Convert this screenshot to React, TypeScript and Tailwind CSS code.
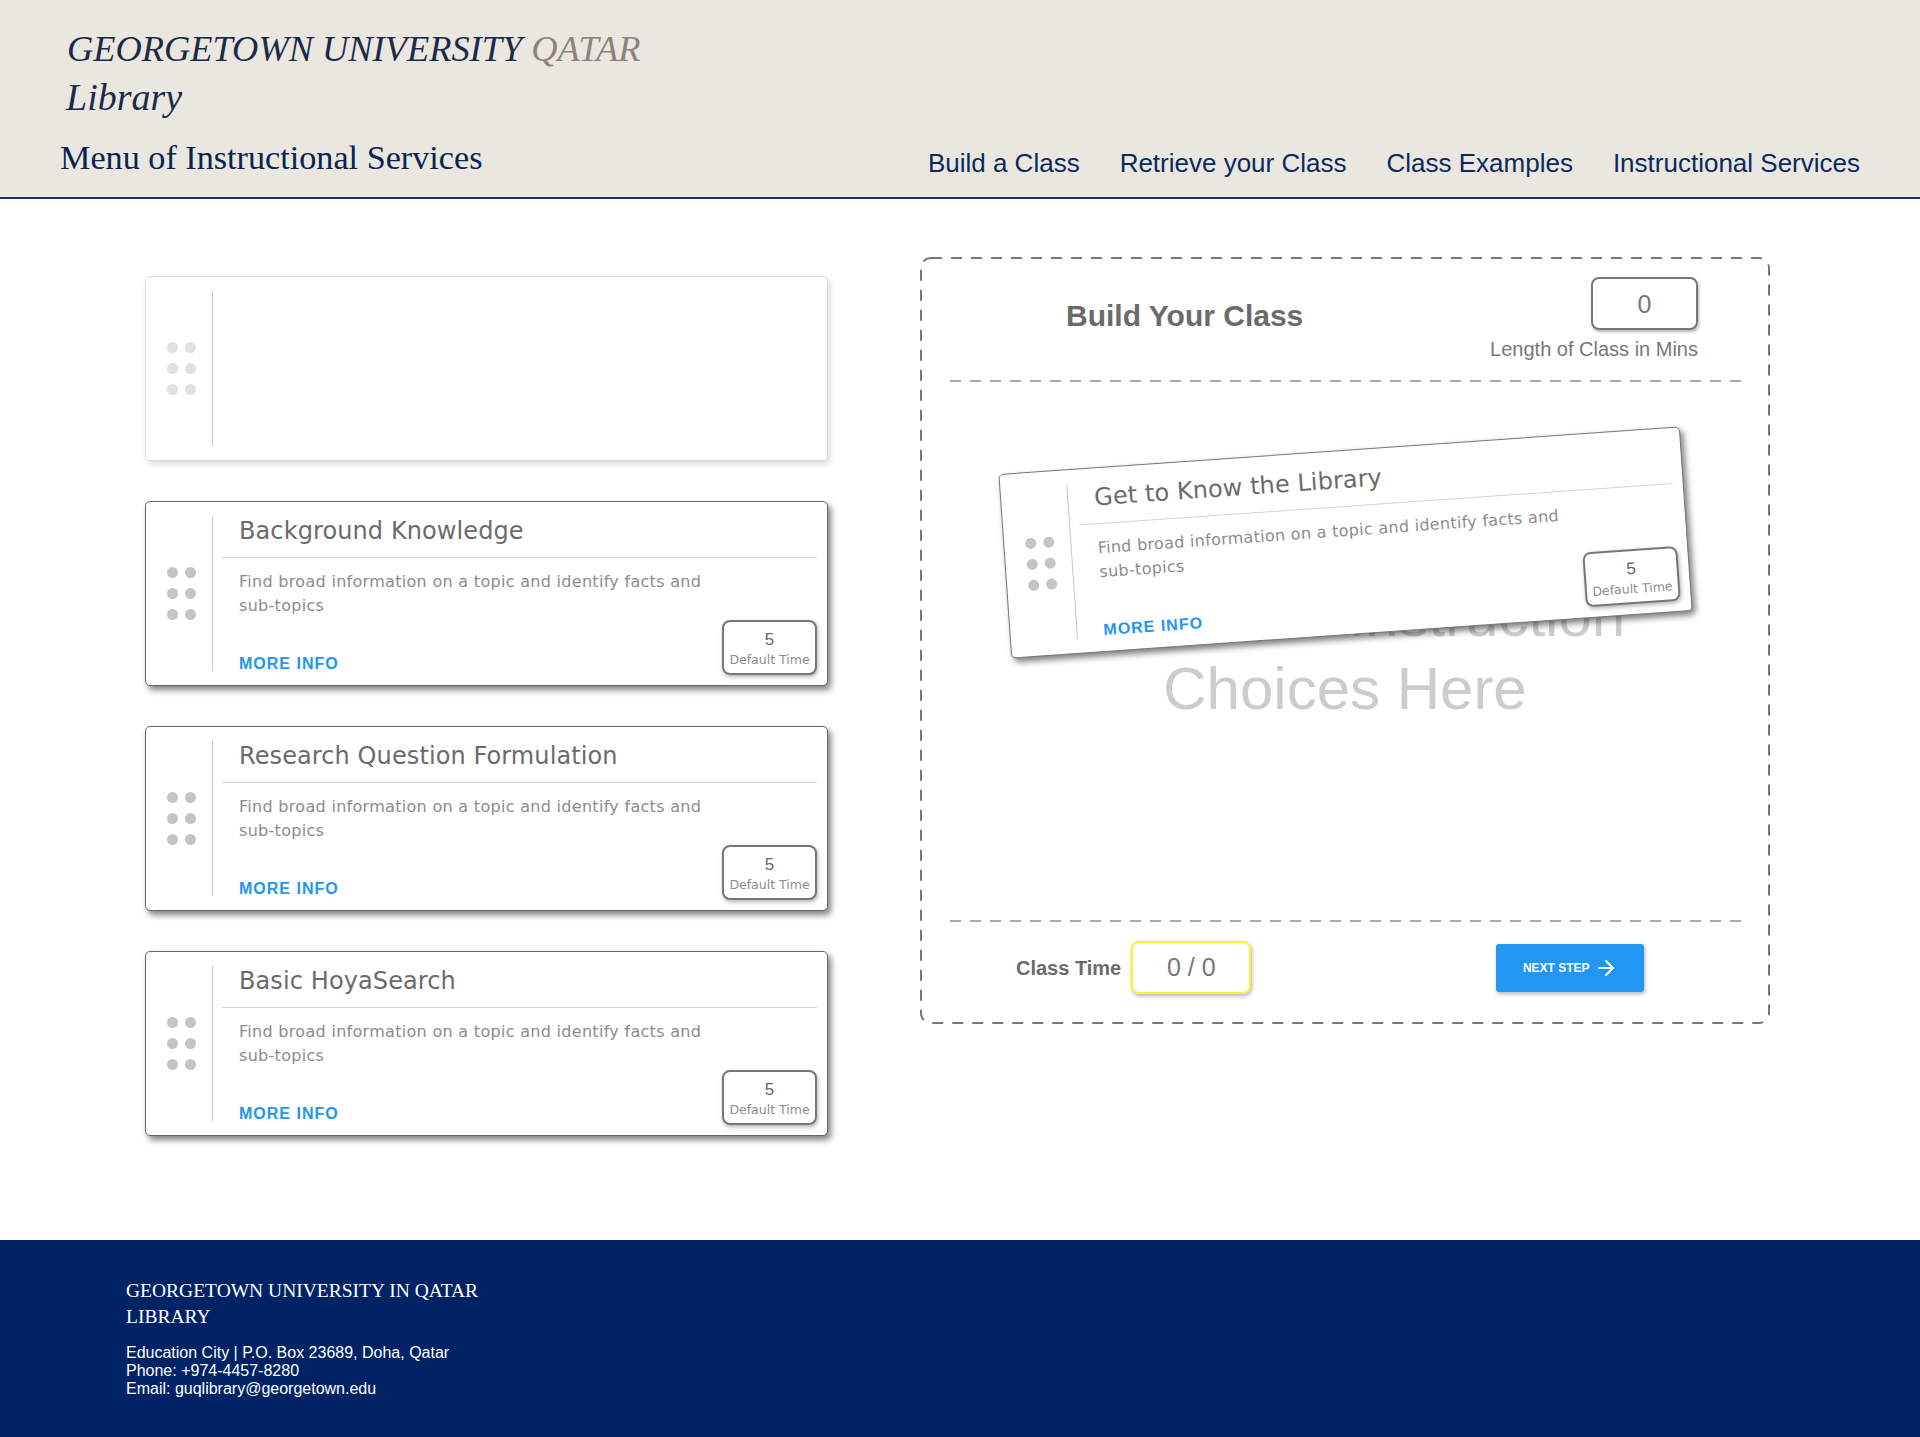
import { ArrowRight } from "lucide-react";

const cards = ["Background Knowledge", "Research Question Formulation", "Basic HoyaSearch"];

function Grip() {
  return (
    <div className="ml-[4px] grid grid-cols-[11px_11px] gap-x-[7px] gap-y-[10px]">
      {[0, 1, 2, 3, 4, 5].map((i) => (
        <span key={i} className="h-[11px] w-[11px] rounded-full bg-[#c4c4c4]" />
      ))}
    </div>
  );
}

function DashedLine() {
  return <div className="ml-[30px] mr-[29px] h-[2px] bg-[repeating-linear-gradient(90deg,#aaa_0_11px,transparent_11px_20px)]" />;
}

function Card({ title, className }: { title?: string; className: string }) {
  return (
    <div className={`flex h-[185px] w-[683px] rounded-[5px] border bg-white font-['DejaVu_Sans',sans-serif] ${className}`}>
      <div className="flex w-[66px] shrink-0 items-center justify-center">
        <Grip />
      </div>
      <div className="my-[14px] w-[1px] bg-[#c8c8c8]" />
      {title && (
        <div className="relative flex-1 pl-[9px] pr-[10px]">
          <div className="h-[56px] border-b border-[#d4d4d4] pl-[17px] pt-[14px] text-[24px] leading-[30px] tracking-[0.1px] text-[#6b6b6b]">
            {title}
          </div>
          <p className="w-[500px] pl-[17px] pt-[12px] text-[16px] leading-[24px] tracking-[0.3px] text-[#8c8c8c]">
            Find broad information on a topic and identify facts and sub-topics
          </p>
          <a className="absolute bottom-[11px] left-[26px] font-['Liberation_Sans',sans-serif] text-[16px] font-bold leading-[20px] tracking-[1px] text-[#2196f3]">
            MORE INFO
          </a>
          <div className="absolute bottom-[10px] right-[10px] flex h-[55px] w-[95px] flex-col items-center rounded-[8px] border-2 border-[#777] bg-white pt-[8px] shadow-[1px_2px_4px_rgba(0,0,0,0.3)]">
            <span className="font-['Liberation_Sans',sans-serif] text-[17px] leading-[20px] text-[#666]">5</span>
            <span className="text-[12.5px] leading-[20px] text-[#8c8c8c]">Default Time</span>
          </div>
        </div>
      )}
    </div>
  );
}

function App() {
  return (
    <div className="flex min-h-screen flex-col bg-white font-['Liberation_Sans',sans-serif]">
      <header className="flex h-[199px] items-start justify-between border-b-2 border-[#1c3157] bg-[#eae7e0]">
        <div className="pl-[60px] pt-[25px] font-['Liberation_Serif',serif] text-[#1c2a4a]">
          <div className="pl-[7px] text-[36.4px] italic leading-[48px]">
            GEORGETOWN UNIVERSITY <span className="text-[#8f827c]">QATAR</span>
          </div>
          <div className="pl-[6px] text-[38px] font-medium italic leading-[48px]">Library</div>
          <div className="pt-[16px] text-[34.2px] leading-[42px] text-[#0b2350]">Menu of Instructional Services</div>
        </div>
        <nav className="flex gap-10 pr-[60px] pt-[146px] text-[26px] leading-[34px] text-[#0a2a5e]">
          <a>Build a Class</a>
          <a>Retrieve your Class</a>
          <a>Class Examples</a>
          <a>Instructional Services</a>
        </nav>
      </header>

      <main className="flex flex-1 items-start pl-[145px]">
        <div className="flex flex-col gap-10 pt-[77px]">
          <Card className="border-[#ddd] shadow-[2px_3px_6px_rgba(0,0,0,0.15)] [&>div:first-child]:opacity-50" />
          {cards.map((c) => (
            <Card key={c} title={c} className="border-[#666] shadow-[3px_4px_6px_rgba(0,0,0,0.5)]" />
          ))}
        </div>

        <section className="relative ml-[92px] mt-[58px] h-[767px] w-[850px]">
          <svg className="absolute inset-0" width="850" height="767" fill="none">
            <rect x="1" y="1" width="848" height="765" rx="10" stroke="#777" strokeWidth="2" strokeDasharray="11 9" />
          </svg>

          <div className="relative ml-[30px] mr-[29px] h-[123px] pt-[2px]">
            <h2 className="absolute left-[116px] top-[40px] text-[30px] font-bold leading-[38px] text-[#6b6b6b]">Build Your Class</h2>
            <div className="absolute right-[43px] top-[20px] flex flex-col items-end">
              <div className="flex h-[53px] w-[107px] items-center justify-center rounded-[8px] border-2 border-[#777] pt-[2px] text-[25px] text-[#777] shadow-[1px_2px_3px_rgba(0,0,0,0.3)]">
                0
              </div>
              <span className="pt-[4px] text-[20px] leading-[30px] text-[#777]">Length of Class in Mins</span>
            </div>
          </div>
          <DashedLine />

          <div className="relative flex h-[538px] flex-col items-center justify-center text-center text-[60px] leading-[73px] text-[#ccc]">
            <div className="pt-[1px]">
              <div>Drop Your Instruction</div>
              <div>Choices Here</div>
            </div>
            <div className="absolute left-[84px] top-[68px] -rotate-[4deg] text-left">
              <Card title="Get to Know the Library" className="border-[#777] shadow-[3px_4px_6px_rgba(0,0,0,0.5)]" />
            </div>
          </div>

          <DashedLine />
          <div className="ml-[30px] mr-[29px] flex items-start">
            <span className="ml-[66px] mt-[33px] text-[20px] font-bold leading-[26px] text-[#6b6b6b]">Class Time</span>
            <div className="ml-[10px] mt-[19px] flex h-[53px] w-[120px] items-center justify-center rounded-[8px] border-2 border-[#f5f52a] text-[25px] text-[#777] shadow-[1px_2px_4px_rgba(0,0,0,0.3)]">
              0 / 0
            </div>
            <button className="ml-[245px] mt-[22px] flex h-[48px] w-[148px] items-center justify-center gap-[4px] rounded-[3px] bg-[#2196f3] text-[12px] font-bold text-white shadow-[1px_2px_4px_rgba(0,0,0,0.3)]">
              NEXT STEP
              <ArrowRight size={24} />
            </button>
          </div>
        </section>
      </main>

      <footer className="h-[197px] bg-[#002366] pl-[126px] pt-[38px] text-white">
        <div className="w-[400px] font-['Liberation_Serif',serif] text-[19.5px] leading-[26px]">
          GEORGETOWN UNIVERSITY IN QATAR LIBRARY
        </div>
        <div className="pt-[14px] text-[16px] leading-[18px]">
          <div>Education City | P.O. Box 23689, Doha, Qatar</div>
          <div>Phone: +974-4457-8280</div>
          <div>Email: guqlibrary@georgetown.edu</div>
        </div>
      </footer>
    </div>
  );
}

export default App;
